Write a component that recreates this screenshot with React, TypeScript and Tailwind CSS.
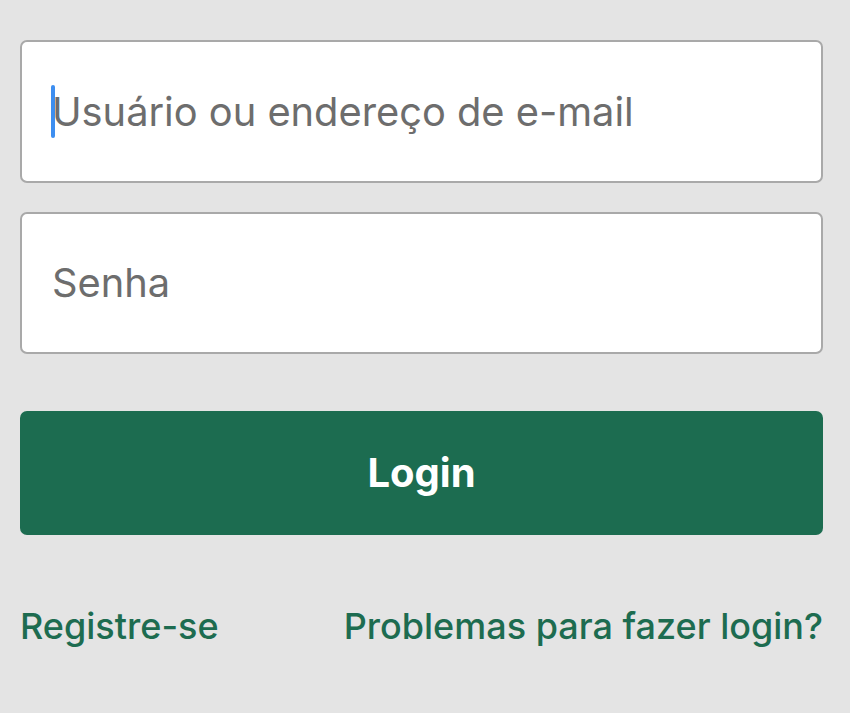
export default function App() {
  return (
    <div
      className="min-h-[713px] w-[850px] bg-[#e4e4e4] pl-[20px] pr-[27px] pt-[40px]"
      style={{ fontFamily: 'Inter, "Noto Sans", sans-serif' }}
    >
      <div className="flex h-[143px] items-center rounded-[7px] border-2 border-[#a9a9a9] bg-white pl-[29px]">
        <span className="mr-[-3px] h-[53px] w-[4px] rounded-full bg-[#3d8ef0]" />
        <span className="text-[39.8px] leading-none text-[#6d6d6d]">Usuário ou endereço de e-mail</span>
      </div>
      <div className="mt-[29px] flex h-[142px] items-center rounded-[7px] border-2 border-[#a9a9a9] bg-white pl-[30px]">
        <span className="text-[39.8px] leading-none text-[#6d6d6d]">Senha</span>
      </div>
      <button className="mt-[57px] flex h-[124px] w-full items-center justify-center rounded-[7px] bg-[#1c6c50] text-[40px] font-bold text-white">
        Login
      </button>
      <div className="mt-[73px] flex items-center justify-between text-[36px] font-medium leading-none text-[#1d6c50]">
        <span>Registre-se</span>
        <span>Problemas para fazer login?</span>
      </div>
    </div>
  )
}
